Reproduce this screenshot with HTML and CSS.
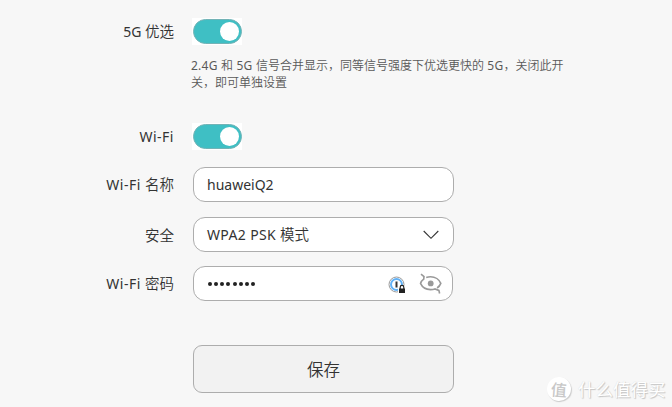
FILE: index.html
```html
<!DOCTYPE html>
<html lang="zh-CN">
<head>
<meta charset="utf-8">
<title>Wi-Fi</title>
<link rel="stylesheet" href="styles.css">
</head>
<body>
<main class="form">
  <div class="row row-switch">
    <div class="label"><span class="latin">5G </span>优选</div>
    <div class="switch"><span class="track"><span class="knob"></span></span></div>
  </div>
  <p class="hint"><span class="latin">2.4G </span>和<span class="latin"> 5G </span>信号合并显示，同等信号强度下优选更快的<span class="latin"> 5G</span>，关闭此开<br>关，即可单独设置</p>
  <div class="row row-switch row-wifi">
    <div class="label"><span class="latin wifi">Wi-Fi</span></div>
    <div class="switch"><span class="track"><span class="knob"></span></span></div>
  </div>
  <div class="row row-name">
    <div class="label"><span class="latin wifi">Wi-Fi </span>名称</div>
    <div class="field"><span class="value latin">huaweiQ2</span></div>
  </div>
  <div class="row row-security">
    <div class="label">安全</div>
    <div class="field">
      <span class="value"><span class="latin caps">WPA2 PSK </span>模式</span>
      <svg class="chevron" width="16" height="10" viewBox="0 0 16 10"><path d="M.7 1 8 8.3 15.300 1" fill="none" stroke="#333" stroke-width="1.1"/></svg>
    </div>
  </div>
  <div class="row row-password">
    <div class="label"><span class="latin wifi">Wi-Fi </span>密码</div>
    <div class="field field-password">
      <span class="dots"><i></i><i></i><i></i><i></i><i></i><i></i><i></i><i></i></span>
      <svg class="key" width="18" height="18" viewBox="0 0 18 18">
        <circle cx="8.500" cy="8.500" r="7.500" fill="#fff" stroke="#9b9b9b" stroke-width="1"/>
        <circle cx="8.500" cy="8.500" r="5.500" fill="#fff" stroke="#62b2f7" stroke-width="2"/>
        <path d="M7.500 5.500h2v6h-2z" fill="#333"/>
        <path d="M10 10h8v8h-8z" fill="#fff"/>
        <path d="M11 12.500h6v4.500h-6z" fill="#222"/>
        <path d="M12.200 13v-1.800a1.800 1.800 0 0 1 3.600 0V13" fill="none" stroke="#222" stroke-width="1.200"/>
      </svg>
      <svg class="eye" width="24" height="22" viewBox="0 0 24 22">
        <g fill="none" stroke="#999" stroke-width="1.600">
          <path d="M2 1.200 5 3.500 4.700 6.200C3.200 7.300 2 8.800 1.500 10.400c1.600 3.500 5.400 6.200 10 6.200 1.600 0 3.100-.2 4.400-.7l4 1.500 .7 3.100"/>
          <path d="M7.200 4.600c1.300-.5 2.800-.8 4.300-.8 4.600 0 8.800 2.800 10.300 6.600-.7 1.900-2 3.500-3.700 4.600"/>
        </g>
        <circle cx="11.700" cy="10.400" r="2.900" fill="#999"/>
      </svg>
    </div>
  </div>
  <button class="save">保存</button>
</main>
<div class="watermark"><span class="badge">值</span><span class="brand">什么值得买</span></div>
</body>
</html>
```
FILE: styles.css
```css
* { box-sizing: border-box; }
body {
  margin: 0;
  width: 672px;
  height: 407px;
  overflow: hidden;
  background: #f7f7f7;
  color: #333;
  font: 350 14.5px/20px "Noto Sans CJK SC", sans-serif;
}
.latin { font-family: "Noto Sans", sans-serif; font-weight: 400; font-size: 14px; white-space: pre; }
.wifi { letter-spacing: .5px; }
.caps { letter-spacing: .35px; }
.form { padding-top: 18px; }
.row { display: flex; align-items: center; height: 35px; }
.label { width: 174px; margin-right: 19px; text-align: right; white-space: nowrap; }
.row-switch { height: 27px; }
.switch {
  width: 50px;
  height: 27px;
  margin-left: -1px;
  padding: 1px 0 1px 1px;
  background: #fff;
}
.track {
  display: flex;
  align-items: center;
  justify-content: flex-end;
  width: 49px;
  height: 25px;
  padding-right: 2px;
  border: 1px solid #73b3b6;
  border-radius: 13px;
  background: #3fbfc4;
}
.knob { width: 19px; height: 19px; border-radius: 50%; background: #fff; }
.hint {
  width: 400px;
  margin: 12px 0 0 191px;
  color: #595959;
  font-size: 12px;
  line-height: 16px;
  white-space: nowrap;
}
.hint .latin { font-size: 12px; letter-spacing: .25px; }
.row-wifi { margin-top: 33px; }
.row-name { margin-top: 17px; }
.row-security { margin-top: 15px; }
.row-password { margin-top: 14px; }
.field {
  display: flex;
  align-items: center;
  width: 261px;
  height: 35px;
  padding: 0 14px 0 13px;
  border: 1px solid #adadad;
  border-radius: 12px;
  background: #fff;
}
.field-password { width: 260px; padding-right: 9px; }
.chevron { margin-left: auto; }
.dots { display: flex; gap: 2.150px; padding-left: 1px; }
.dots i { width: 4px; height: 4px; border-radius: 50%; background: #222; }
.key { margin-left: auto; margin-top: 2px; }
.eye { margin-left: 13px; }
.save {
  display: block;
  width: 261px;
  height: 48px;
  margin: 44px 0 0 193px;
  padding: 0 0 1px;
  border: 1px solid #adadad;
  border-radius: 9px;
  background: #f2f2f2;
  color: #333;
  font: 350 16.5px/24px "Noto Sans CJK SC", sans-serif;
}
.watermark {
  position: absolute;
  left: 547px;
  top: 377px;
  display: flex;
  align-items: center;
  gap: 7px;
  color: #fff;
  font-size: 17.5px;
  font-weight: 400;
  line-height: 24px;
  white-space: nowrap;
  text-shadow: 1px 1px 1px #c4c4c4, 0 0 1px #d4d4d4;
}
.badge {
  width: 24px;
  height: 24px;
  border-radius: 50%;
  background: #fff;
  box-shadow: 1px 1px 1px #ccc;
  color: #c8c8c8;
  font-size: 16px;
  font-weight: 500;
  text-align: center;
  text-shadow: none;
  transform: rotate(4deg);
}
```
